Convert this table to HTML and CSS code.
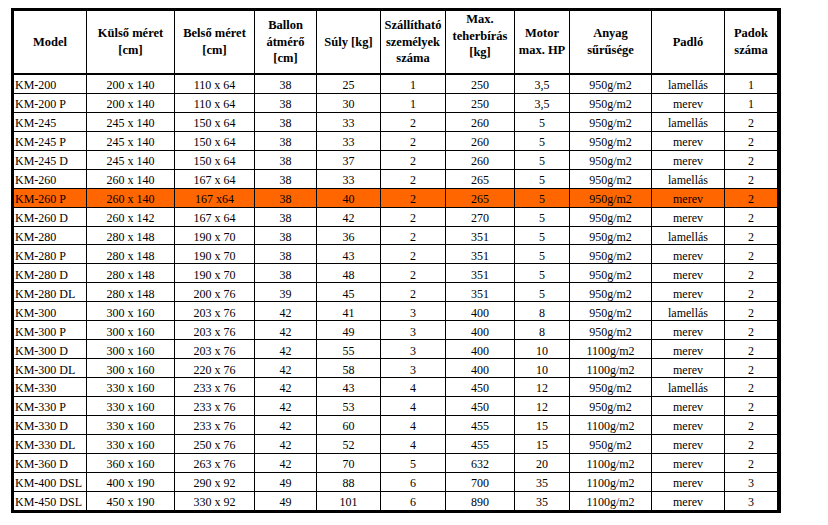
FILE: index.html
```html
<!DOCTYPE html>
<html lang="hu">
<head>
<meta charset="utf-8">
<title>Csónak modellek</title>
<link rel="stylesheet" href="styles.css">
</head>
<body>
<table class="specs">
  <colgroup>
    <col class="c1"><col class="c2"><col class="c3"><col class="c4"><col class="c5"><col class="c6"><col class="c7"><col class="c8"><col class="c9"><col class="c10"><col class="c11">
  </colgroup>
  <thead>
    <tr>
      <th>Model</th>
      <th>Külső méret<br>[cm]</th>
      <th>Belső méret<br>[cm]</th>
      <th>Ballon<br>átmérő<br>[cm]</th>
      <th>Súly [kg]</th>
      <th>Szállítható<br>személyek<br>száma</th>
      <th class="raised">Max.<br>teherbírás<br>[kg]</th>
      <th>Motor<br>max. HP</th>
      <th>Anyag<br>sűrűsége</th>
      <th>Padló</th>
      <th>Padok<br>száma</th>
    </tr>
  </thead>
  <tbody>
    <tr><td>KM-200</td><td>200 x 140</td><td>110 x 64</td><td>38</td><td>25</td><td>1</td><td>250</td><td>3,5</td><td>950g/m2</td><td>lamellás</td><td>1</td></tr>
    <tr><td>KM-200 P</td><td>200 x 140</td><td>110 x 64</td><td>38</td><td>30</td><td>1</td><td>250</td><td>3,5</td><td>950g/m2</td><td>merev</td><td>1</td></tr>
    <tr><td>KM-245</td><td>245 x 140</td><td>150 x 64</td><td>38</td><td>33</td><td>2</td><td>260</td><td>5</td><td>950g/m2</td><td>lamellás</td><td>2</td></tr>
    <tr><td>KM-245 P</td><td>245 x 140</td><td>150 x 64</td><td>38</td><td>33</td><td>2</td><td>260</td><td>5</td><td>950g/m2</td><td>merev</td><td>2</td></tr>
    <tr><td>KM-245 D</td><td>245 x 140</td><td>150 x 64</td><td>38</td><td>37</td><td>2</td><td>260</td><td>5</td><td>950g/m2</td><td>merev</td><td>2</td></tr>
    <tr><td>KM-260</td><td>260 x 140</td><td>167 x 64</td><td>38</td><td>33</td><td>2</td><td>265</td><td>5</td><td>950g/m2</td><td>lamellás</td><td>2</td></tr>
    <tr class="hl"><td>KM-260 P</td><td>260 x 140</td><td>167 x64</td><td>38</td><td>40</td><td>2</td><td>265</td><td>5</td><td>950g/m2</td><td>merev</td><td>2</td></tr>
    <tr><td>KM-260 D</td><td>260 x 142</td><td>167 x 64</td><td>38</td><td>42</td><td>2</td><td>270</td><td>5</td><td>950g/m2</td><td>merev</td><td>2</td></tr>
    <tr><td>KM-280</td><td>280 x 148</td><td>190 x 70</td><td>38</td><td>36</td><td>2</td><td>351</td><td>5</td><td>950g/m2</td><td>lamellás</td><td>2</td></tr>
    <tr><td>KM-280 P</td><td>280 x 148</td><td>190 x 70</td><td>38</td><td>43</td><td>2</td><td>351</td><td>5</td><td>950g/m2</td><td>merev</td><td>2</td></tr>
    <tr><td>KM-280 D</td><td>280 x 148</td><td>190 x 70</td><td>38</td><td>48</td><td>2</td><td>351</td><td>5</td><td>950g/m2</td><td>merev</td><td>2</td></tr>
    <tr><td>KM-280 DL</td><td>280 x 148</td><td>200 x 76</td><td>39</td><td>45</td><td>2</td><td>351</td><td>5</td><td>950g/m2</td><td>merev</td><td>2</td></tr>
    <tr><td>KM-300</td><td>300 x 160</td><td>203 x 76</td><td>42</td><td>41</td><td>3</td><td>400</td><td>8</td><td>950g/m2</td><td>lamellás</td><td>2</td></tr>
    <tr><td>KM-300 P</td><td>300 x 160</td><td>203 x 76</td><td>42</td><td>49</td><td>3</td><td>400</td><td>8</td><td>950g/m2</td><td>merev</td><td>2</td></tr>
    <tr><td>KM-300 D</td><td>300 x 160</td><td>203 x 76</td><td>42</td><td>55</td><td>3</td><td>400</td><td>10</td><td>1100g/m2</td><td>merev</td><td>2</td></tr>
    <tr><td>KM-300 DL</td><td>300 x 160</td><td>220 x 76</td><td>42</td><td>58</td><td>3</td><td>400</td><td>10</td><td>1100g/m2</td><td>merev</td><td>2</td></tr>
    <tr><td>KM-330</td><td>330 x 160</td><td>233 x 76</td><td>42</td><td>43</td><td>4</td><td>450</td><td>12</td><td>950g/m2</td><td>lamellás</td><td>2</td></tr>
    <tr><td>KM-330 P</td><td>330 x 160</td><td>233 x 76</td><td>42</td><td>53</td><td>4</td><td>450</td><td>12</td><td>950g/m2</td><td>merev</td><td>2</td></tr>
    <tr><td>KM-330 D</td><td>330 x 160</td><td>233 x 76</td><td>42</td><td>60</td><td>4</td><td>455</td><td>15</td><td>1100g/m2</td><td>merev</td><td>2</td></tr>
    <tr><td>KM-330 DL</td><td>330 x 160</td><td>250 x 76</td><td>42</td><td>52</td><td>4</td><td>455</td><td>15</td><td>950g/m2</td><td>merev</td><td>2</td></tr>
    <tr><td>KM-360 D</td><td>360 x 160</td><td>263 x 76</td><td>42</td><td>70</td><td>5</td><td>632</td><td>20</td><td>1100g/m2</td><td>merev</td><td>2</td></tr>
    <tr><td>KM-400 DSL</td><td>400 x 190</td><td>290 x 92</td><td>49</td><td>88</td><td>6</td><td>700</td><td>35</td><td>1100g/m2</td><td>merev</td><td>3</td></tr>
    <tr><td>KM-450 DSL</td><td>450 x 190</td><td>330 x 92</td><td>49</td><td>101</td><td>6</td><td>890</td><td>35</td><td>1100g/m2</td><td>merev</td><td>3</td></tr>
  </tbody>
</table>
</body>
</html>
```

FILE: styles.css
```css
html, body {
  margin: 0;
  padding: 0;
  background: #ffffff;
}

body {
  font-family: "Liberation Serif", "Times New Roman", serif;
  color: #000000;
}

.specs {
  margin: 8px 0 0 11px;
  border-collapse: separate;
  border-spacing: 0;
  border: 3px solid #000;
  border-right-width: 4px;
  table-layout: fixed;
  width: 770px;
}

.c1 { width: 73px; }
.c2 { width: 88px; }
.c3 { width: 80px; }
.c4 { width: 62px; }
.c5 { width: 64px; }
.c6 { width: 65px; }
.c7 { width: 69px; }
.c8 { width: 55px; }
.c9 { width: 82px; }
.c10 { width: 73px; }
.c11 { width: 52px; }

.specs th,
.specs td {
  box-sizing: border-box;
  padding: 0;
  border-right: 1px solid #000;
  text-align: center;
  white-space: nowrap;
}

.specs th:last-child,
.specs td:last-child {
  border-right: none;
}

.specs th {
  height: 64px;
  font-size: 12.5px;
  font-weight: bold;
  line-height: 16.6px;
  vertical-align: middle;
  border-bottom: 2px solid #000;
}

.specs th.raised {
  vertical-align: top;
}

.specs td {
  height: 18.95px;
  font-size: 12px;
  line-height: 14px;
  vertical-align: middle;
  padding-top: 3px;
  border-bottom: 1px solid #000;
}

.specs td:first-child {
  text-align: left;
  padding-left: 1px;
}

.specs tbody tr:last-child td {
  border-bottom: none;
  height: 18px;
}

.specs tr.hl td {
  background: #ff6600;
}
```
